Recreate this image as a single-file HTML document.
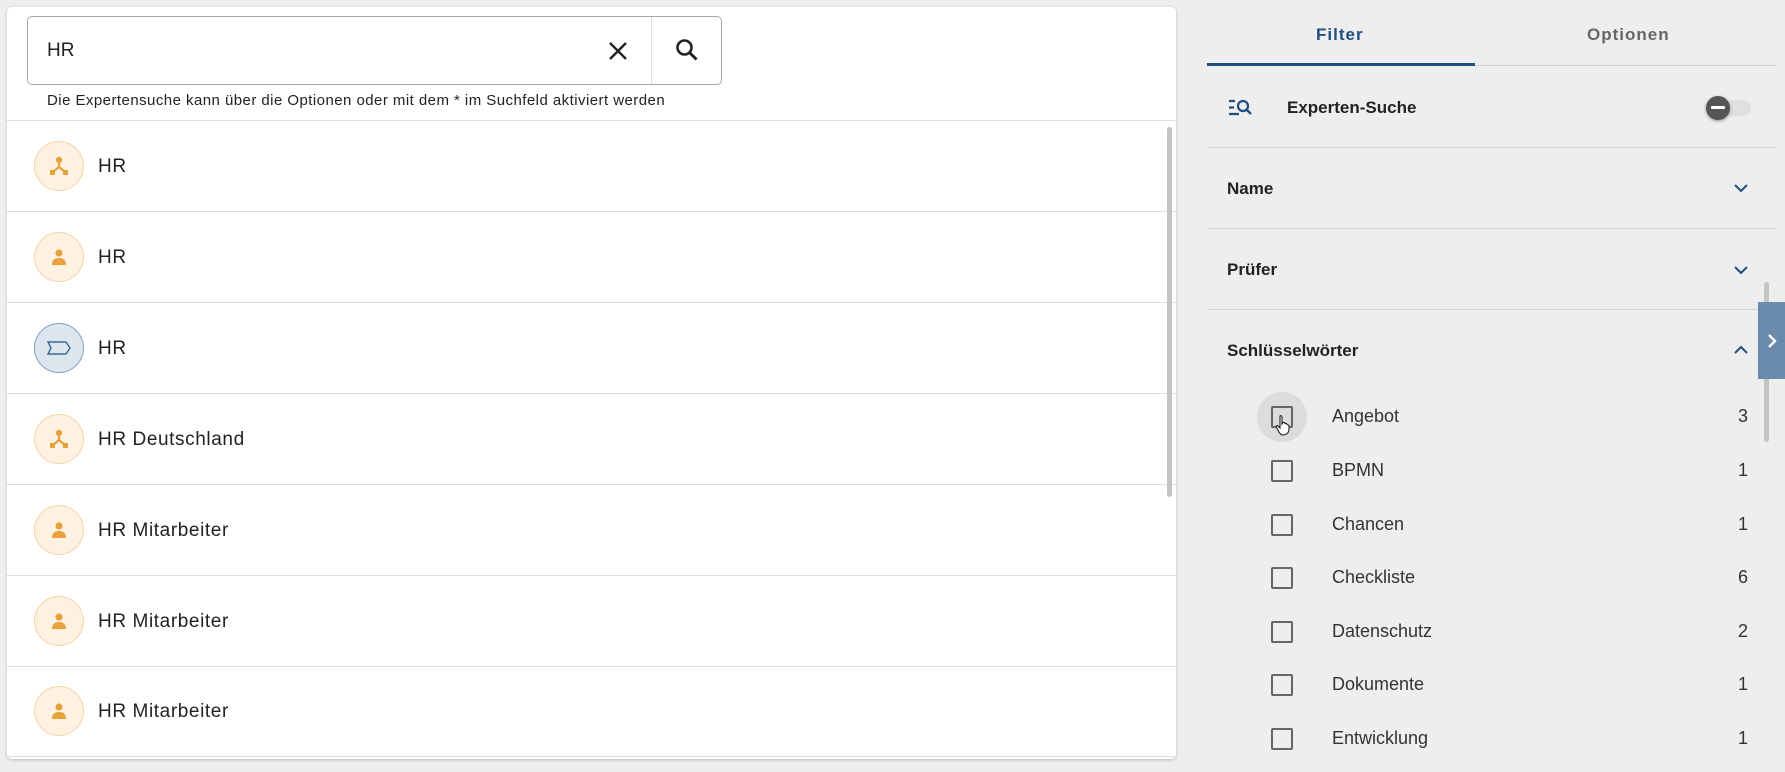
<!DOCTYPE html>
<html><head><meta charset="utf-8"><style>
*{box-sizing:border-box;margin:0;padding:0}
body{width:1785px;height:772px;background:#eeeeee;font-family:"Liberation Sans",sans-serif;position:relative;overflow:hidden;color:#222}
.abs{position:absolute}
.card{left:7px;top:7px;width:1169px;height:752px;background:#fff;border-radius:5px;box-shadow:0 1px 3px rgba(0,0,0,.2);overflow:hidden}
.sbox{left:27px;top:16px;width:695px;height:69px;border:1px solid #a8a8a8;border-radius:5px;background:#fff}
.row{left:7px;width:1169px;height:91px;border-bottom:1px solid #dedede}
.row .ic{position:absolute;left:27px;top:20px;width:50px;height:50px;border-radius:50%;background:#fdf1e2;border:1.5px solid #f6d4a3}
.row .ic.b{background:#dde6ee;border-color:#7f9fbb}
.row .t{position:absolute;left:91px;top:0;line-height:91px;font-size:19px;color:#222;letter-spacing:.6px}
.row .ic svg{position:absolute;left:12px;top:12px}
.hl{height:1px;background:#d4d4d4;left:1207px;width:570px}
.sec{left:1227px;font-size:17px;font-weight:bold;color:#222}
.chev{left:1733px}
.cb{left:1271px;width:22px;height:22px;border:2px solid #666;border-radius:2px}
.lab{left:1332px;font-size:18px;color:#333}
.cnt{left:1736px;font-size:18px;color:#333;width:12px;text-align:right}
</style></head><body>
<div class="abs card"></div>
<div class="abs sbox">
 <div class="abs" style="left:19px;top:0;line-height:67px;font-size:19px;color:#222">HR</div>
 <div class="abs" style="left:623px;top:0;width:1px;height:67px;background:#dcdcdc"></div>
 <svg class="abs" style="left:579px;top:23px" width="22" height="22" viewBox="0 0 22 22"><path d="M3 3L19 19M19 3L3 19" stroke="#222" stroke-width="2.4"/></svg>
 <svg class="abs" style="left:646px;top:20px" width="26" height="26" viewBox="0 0 26 26"><circle cx="10.5" cy="10.5" r="7" fill="none" stroke="#222" stroke-width="2.6"/><path d="M15.5 15.5L22.5 22.5" stroke="#222" stroke-width="3"/></svg>
</div>
<div class="abs" style="left:47px;top:92px;font-size:15px;color:#222;letter-spacing:.45px">Die Expertensuche kann über die Optionen oder mit dem * im Suchfeld aktiviert werden</div>
<div class="abs" style="left:7px;top:120px;width:1169px;height:1px;background:#dedede"></div>

<div class="abs row" style="top:121px"><div class="ic"><svg width="24" height="24" viewBox="0 0 24 24"><circle cx="12" cy="6" r="3.2" fill="#e9a23b"/><path d="M12 8V13L6 18M12 13L18 18" stroke="#e9a23b" stroke-width="2.2" fill="none"/><rect x="3" y="16" width="5" height="5" fill="#e9a23b"/><rect x="16" y="16" width="5" height="5" fill="#e9a23b"/></svg></div><div class="t">HR</div></div>
<div class="abs row" style="top:212px"><div class="ic"><svg width="24" height="24" viewBox="0 0 24 24"><circle cx="12" cy="8" r="3.6" fill="#e9a23b"/><path d="M5 20Q5 13 12 13Q19 13 19 20Z" fill="#e9a23b"/></svg></div><div class="t">HR</div></div>
<div class="abs row" style="top:303px"><div class="ic b"><svg width="24" height="24" viewBox="0 0 24 24"><path d="M1 6H19L23 12L19 18H1L4 12Z" fill="none" stroke="#3c6a94" stroke-width="1.4"/></svg></div><div class="t">HR</div></div>
<div class="abs row" style="top:394px"><div class="ic"><svg width="24" height="24" viewBox="0 0 24 24"><circle cx="12" cy="6" r="3.2" fill="#e9a23b"/><path d="M12 8V13L6 18M12 13L18 18" stroke="#e9a23b" stroke-width="2.2" fill="none"/><rect x="3" y="16" width="5" height="5" fill="#e9a23b"/><rect x="16" y="16" width="5" height="5" fill="#e9a23b"/></svg></div><div class="t">HR Deutschland</div></div>
<div class="abs row" style="top:485px"><div class="ic"><svg width="24" height="24" viewBox="0 0 24 24"><circle cx="12" cy="8" r="3.6" fill="#e9a23b"/><path d="M5 20Q5 13 12 13Q19 13 19 20Z" fill="#e9a23b"/></svg></div><div class="t">HR Mitarbeiter</div></div>
<div class="abs row" style="top:576px"><div class="ic"><svg width="24" height="24" viewBox="0 0 24 24"><circle cx="12" cy="8" r="3.6" fill="#e9a23b"/><path d="M5 20Q5 13 12 13Q19 13 19 20Z" fill="#e9a23b"/></svg></div><div class="t">HR Mitarbeiter</div></div>
<div class="abs row" style="top:666px"><div class="ic"><svg width="24" height="24" viewBox="0 0 24 24"><circle cx="12" cy="8" r="3.6" fill="#e9a23b"/><path d="M5 20Q5 13 12 13Q19 13 19 20Z" fill="#e9a23b"/></svg></div><div class="t">HR Mitarbeiter</div></div>
<div class="abs" style="left:1167px;top:127px;width:5px;height:370px;border-radius:3px;background:#c4c4c4"></div>

<div class="abs" style="left:1316px;top:25px;font-size:17px;font-weight:bold;color:#1f4e80;letter-spacing:1px">Filter</div>
<div class="abs" style="left:1587px;top:25px;font-size:17px;font-weight:bold;color:#666;letter-spacing:1px">Optionen</div>
<div class="abs" style="left:1207px;top:65px;width:570px;height:1px;background:#d0d0d0"></div>
<div class="abs" style="left:1207px;top:63px;width:268px;height:3px;background:#1f4e80"></div>

<svg class="abs" style="left:1228px;top:98px" width="26" height="20" viewBox="0 0 26 20"><path d="M1 3H7M1 9.5H6M1 16H11" stroke="#1f4e80" stroke-width="2.2"/><circle cx="15" cy="8" r="5" fill="none" stroke="#1f4e80" stroke-width="2.2"/><path d="M18.5 11.5L23 16" stroke="#1f4e80" stroke-width="2.4"/></svg>
<div class="abs" style="left:1287px;top:98px;font-size:17px;font-weight:bold;color:#222">Experten-Suche</div>
<div class="abs" style="left:1712px;top:100px;width:39px;height:16px;border-radius:8px;background:#e0e0e0"></div>
<div class="abs" style="left:1706px;top:96px;width:24px;height:24px;border-radius:50%;background:#555;box-shadow:0 1px 3px rgba(0,0,0,.4)"><div class="abs" style="left:5px;top:10px;width:14px;height:3px;background:#fff;border-radius:1px"></div></div>
<div class="abs hl" style="top:147px"></div>
<div class="abs sec" style="top:179px">Name</div>
<svg class="abs chev" style="top:182px" width="16" height="12" viewBox="0 0 16 12"><path d="M2 3L8 9L14 3" fill="none" stroke="#1f4e80" stroke-width="2"/></svg>
<div class="abs hl" style="top:228px"></div>
<div class="abs sec" style="top:260px">Prüfer</div>
<svg class="abs chev" style="top:264px" width="16" height="12" viewBox="0 0 16 12"><path d="M2 3L8 9L14 3" fill="none" stroke="#1f4e80" stroke-width="2"/></svg>
<div class="abs hl" style="top:309px"></div>
<div class="abs sec" style="top:341px">Schlüsselwörter</div>
<svg class="abs chev" style="top:344px" width="16" height="12" viewBox="0 0 16 12"><path d="M2 9L8 3L14 9" fill="none" stroke="#1f4e80" stroke-width="2"/></svg>
<div class="abs" style="left:1764px;top:282px;width:5px;height:160px;border-radius:3px;background:#c4c4c4"></div>
<div class="abs" style="left:1758px;top:302px;width:27px;height:77px;background:#6a8bab"></div>
<svg class="abs" style="left:1766px;top:333px" width="12" height="16" viewBox="0 0 12 16"><path d="M3 2L9 8L3 14" fill="none" stroke="#fff" stroke-width="2.4"/></svg>

<div class="abs" style="left:1257px;top:392px;width:50px;height:50px;border-radius:50%;background:#dcdcdc"></div>
<div class="abs cb" style="top:406px"></div>
<svg class="abs" style="left:1275px;top:414px" width="16" height="22" viewBox="0 0 16 22"><path d="M5 2Q6.5 1 7 3V10L8 8.5Q9.5 8 10 9.5Q11.5 9 12 10.5Q13.5 10.5 14 12V16Q13 21 8 21Q5 21 3 16L1 12.5Q1.5 11 3 12L5 14V3Z" fill="#fff" stroke="#222" stroke-width="1.1"/></svg>
<div class="abs lab" style="top:406px">Angebot</div><div class="abs cnt" style="top:406px">3</div>
<div class="abs cb" style="top:460px"></div><div class="abs lab" style="top:460px">BPMN</div><div class="abs cnt" style="top:460px">1</div>
<div class="abs cb" style="top:514px"></div><div class="abs lab" style="top:514px">Chancen</div><div class="abs cnt" style="top:514px">1</div>
<div class="abs cb" style="top:567px"></div><div class="abs lab" style="top:567px">Checkliste</div><div class="abs cnt" style="top:567px">6</div>
<div class="abs cb" style="top:621px"></div><div class="abs lab" style="top:621px">Datenschutz</div><div class="abs cnt" style="top:621px">2</div>
<div class="abs cb" style="top:674px"></div><div class="abs lab" style="top:674px">Dokumente</div><div class="abs cnt" style="top:674px">1</div>
<div class="abs cb" style="top:728px"></div><div class="abs lab" style="top:728px">Entwicklung</div><div class="abs cnt" style="top:728px">1</div>
</body></html>
